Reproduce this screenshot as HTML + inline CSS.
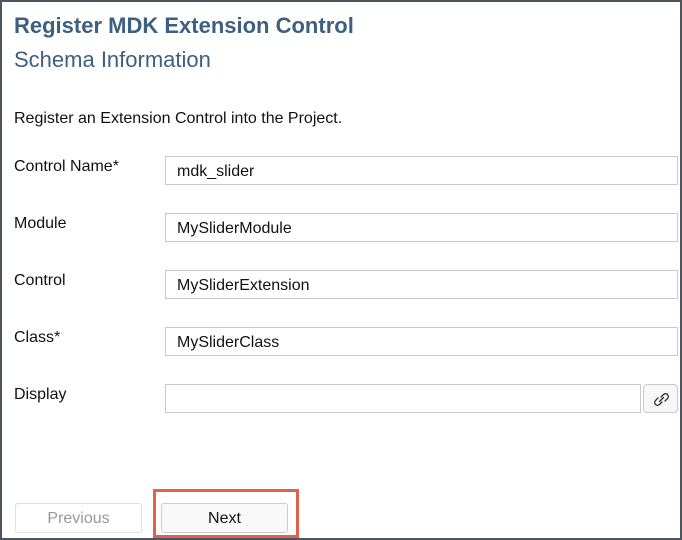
<!DOCTYPE html>
<html><head><style>
body{margin:0;width:682px;height:540px;overflow:hidden;background:#fff;font-family:"Liberation Sans",sans-serif;}
.frame{position:absolute;left:0;top:0;width:678px;height:536px;border:2px solid #4a5560;}
.t1{position:absolute;left:14px;top:13px;font-size:22px;font-weight:bold;color:#3d5f80;}
.t2{position:absolute;left:14px;top:47px;font-size:22px;color:#3d5f80;}
.p{position:absolute;left:14px;top:110px;font-size:16px;color:#111;}
.l{position:absolute;left:14px;font-size:16px;color:#111;}
.in{position:absolute;left:165px;width:513px;box-sizing:border-box;height:29px;border:1px solid #c9c9c9;font-size:16px;padding:6px 11px 0;color:#111;}
.lk{position:absolute;left:643px;top:384px;width:35px;height:29px;border:1px solid #c9c9c9;border-radius:4px;box-sizing:border-box;background:#f7f7f7;}
.btn{position:absolute;top:503px;width:127px;height:30px;box-sizing:border-box;border:1px solid #ccc;border-radius:3px;font-size:16px;text-align:center;line-height:29px;}
.red{position:absolute;left:153px;top:489px;width:146px;height:49px;box-sizing:border-box;border:3px solid #e0614f;}
</style></head><body>
<div class="frame"></div>
<div class="t1">Register MDK Extension Control</div>
<div class="t2">Schema Information</div>
<div class="p">Register an Extension Control into the Project.</div>
<div class="l" style="top:158px">Control Name*</div>
<div class="in" style="top:156px">mdk_slider</div>
<div class="l" style="top:215px">Module</div>
<div class="in" style="top:213px">MySliderModule</div>
<div class="l" style="top:272px">Control</div>
<div class="in" style="top:270px">MySliderExtension</div>
<div class="l" style="top:329px">Class*</div>
<div class="in" style="top:327px">MySliderClass</div>
<div class="l" style="top:386px">Display</div>
<div class="in" style="top:384px;width:476px"></div>
<div class="lk"><svg width="35" height="29" viewBox="0 0 35 29"><g fill="none" stroke="#333" stroke-width="1.3" stroke-linecap="round"><path d="M17 12 L19.5 9.5 a2.8 2.8 0 0 1 4 4 L21 16"/><path d="M18 17 L15.5 19.5 a2.8 2.8 0 0 1 -4 -4 L14 13"/><path d="M15.5 16.5 L19.5 12.5"/></g></svg></div>
<div class="btn" style="left:15px;color:#999;border-color:#e0e0e0">Previous</div>
<div class="btn" style="left:161px;color:#111;background:#f9f9f9">Next</div>
<div class="red"></div>
</body></html>
